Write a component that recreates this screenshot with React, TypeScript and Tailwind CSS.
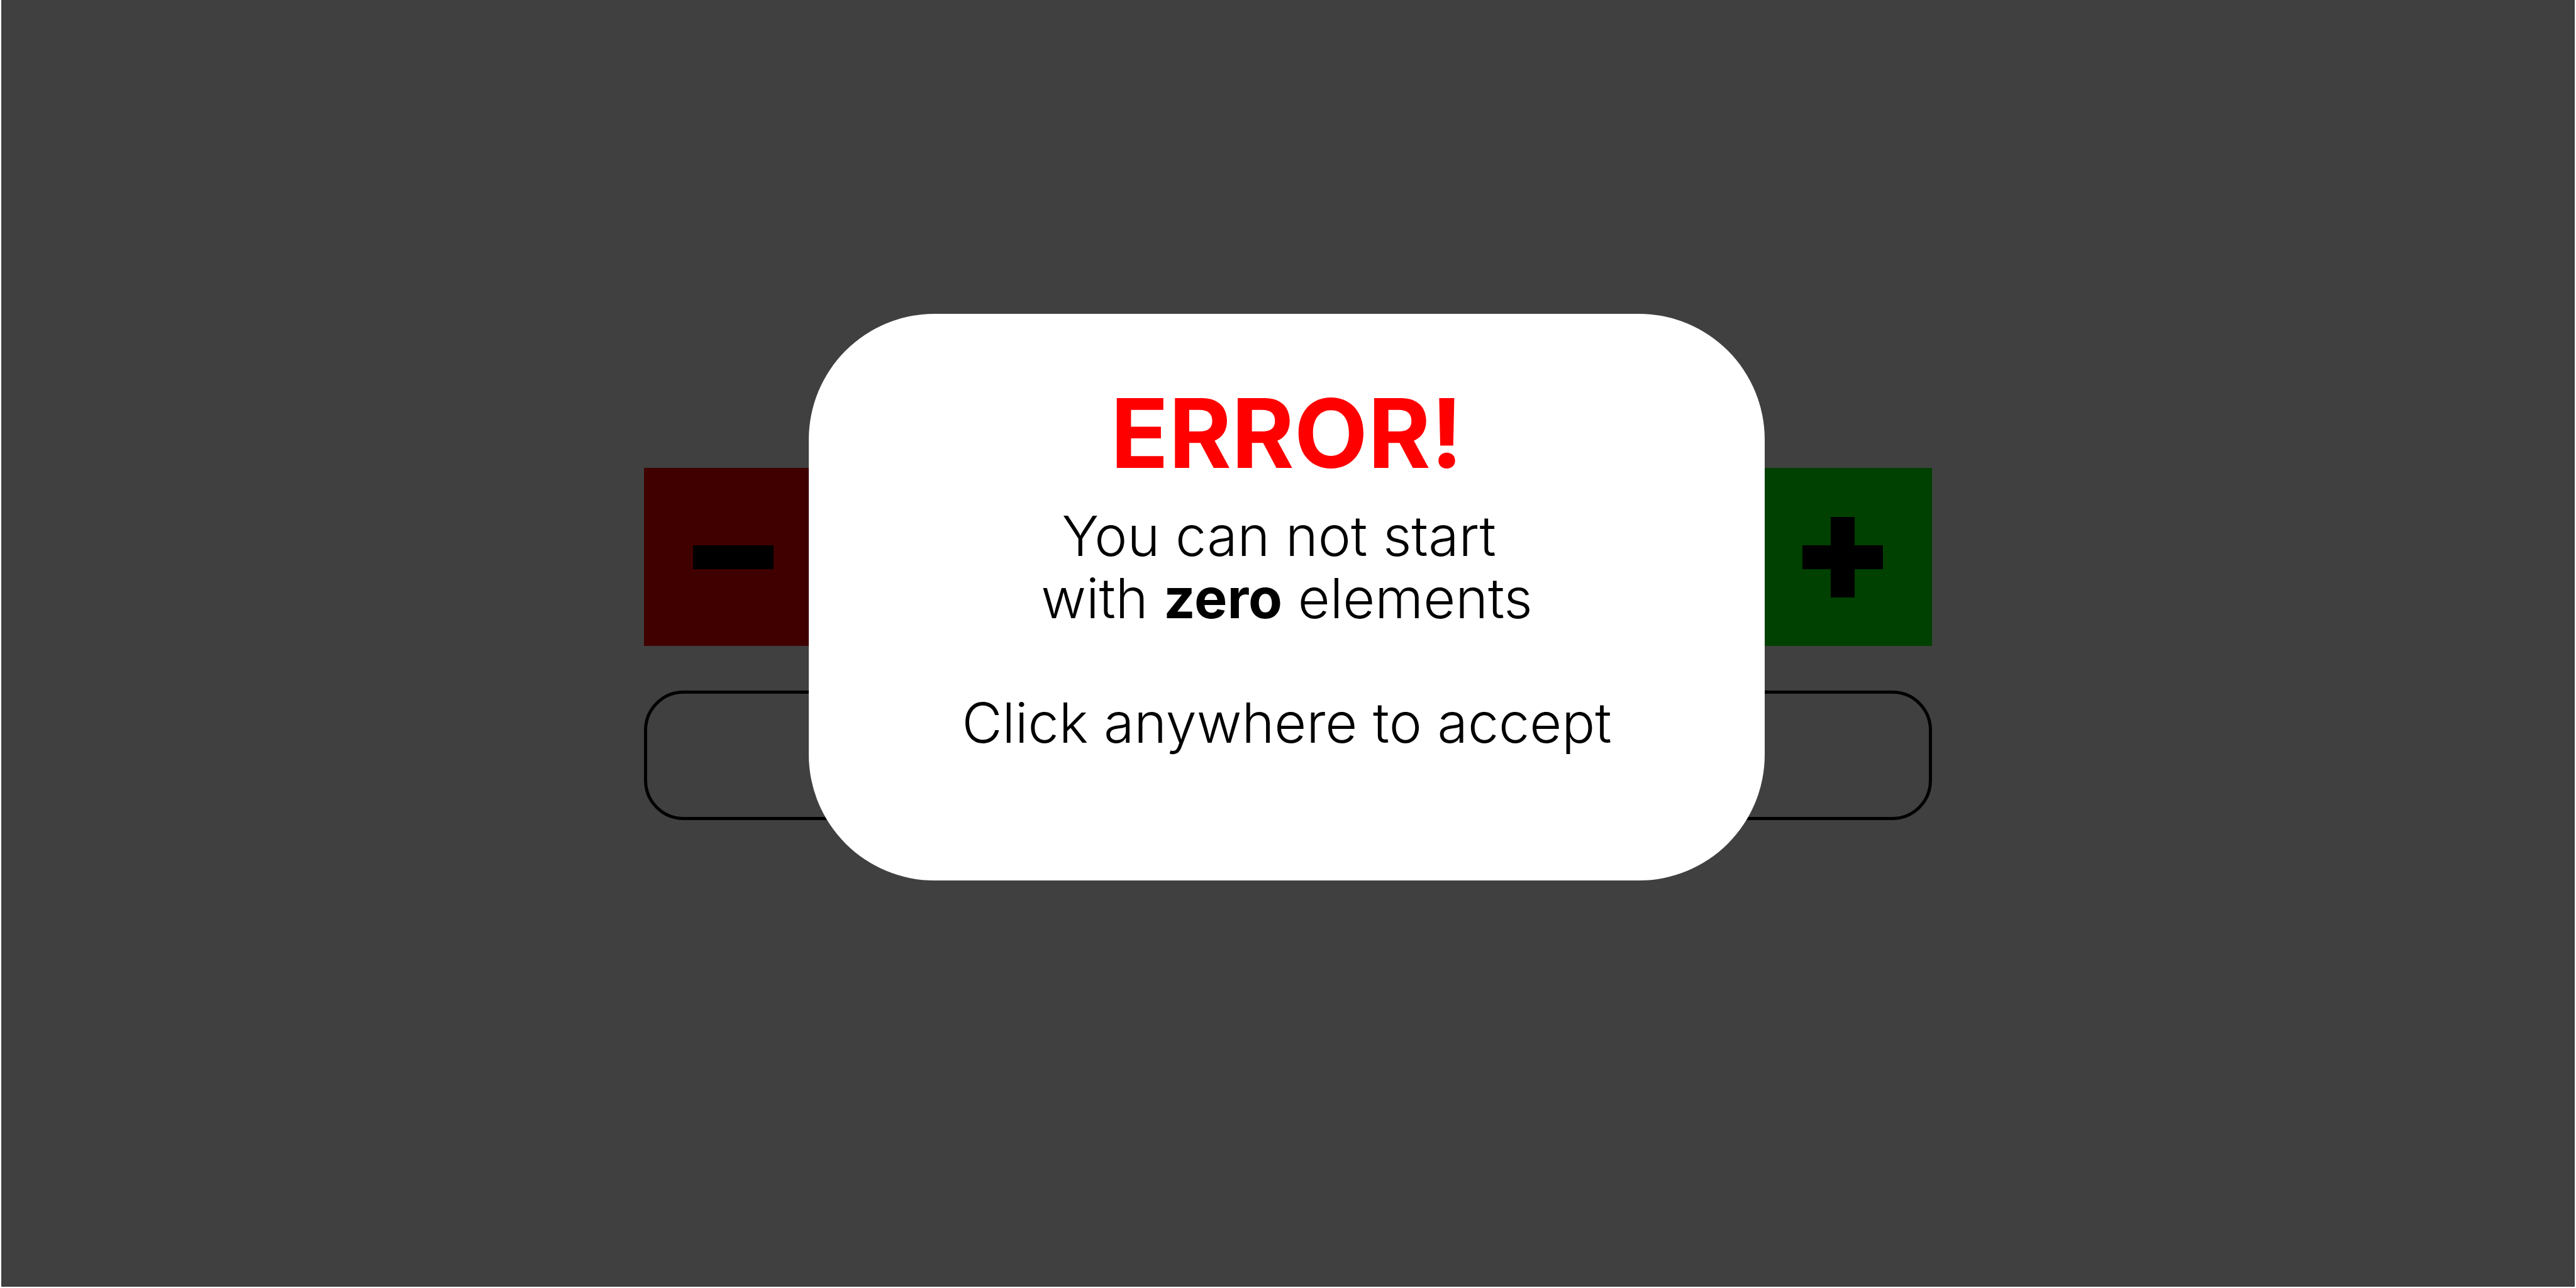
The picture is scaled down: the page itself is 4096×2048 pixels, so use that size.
import { useState } from "react";

function Setup() {
  return (
    <main className="mx-auto flex w-1/2 flex-col gap-[71px] pt-[744px]">
      <div className="flex justify-between">
        <button
          type="button"
          aria-label="Remove element"
          className="flex h-[283px] w-[284px] items-center justify-center bg-[#ff0000]"
        >
          <svg viewBox="0 0 128 128" className="size-32" aria-hidden="true">
            <rect x="0" y="45" width="128" height="38" />
          </svg>
        </button>
        <button
          type="button"
          aria-label="Add element"
          className="flex h-[283px] w-[284px] items-center justify-center bg-[#00ff00]"
        >
          <svg viewBox="0 0 128 128" className="size-32" aria-hidden="true">
            <path d="M45 0h38v45h45v38H83v45H45V83H0V45h45z" />
          </svg>
        </button>
      </div>
      <button
        type="button"
        aria-label="Start"
        className="h-[206px] w-full rounded-[63px] border-5 border-black"
      />
    </main>
  );
}

function ErrorDialog({ onAccept }: { onAccept: () => void }) {
  return (
    <div
      onClick={onAccept}
      className="fixed inset-0 mx-0.5 mb-0.5 flex items-start justify-center bg-black/75 pt-[499px] pr-1"
    >
      <section
        role="alertdialog"
        aria-labelledby="error-title"
        aria-describedby="error-text"
        className="flex w-[1520px] flex-col gap-6 rounded-[200px] bg-white pt-[100px] pb-[201px] text-center"
      >
        <h1 id="error-title" className="text-[152px] leading-[180px] font-bold text-[#ff0000]">
          ERROR!
        </h1>
        <div id="error-text" className="flex flex-col gap-[99px] text-[88px] leading-[99px] font-light text-black">
          <p>
            You can not start&nbsp;
            <br />
            with <b className="font-bold">zero</b> elements
          </p>
          <p>Click anywhere to accept</p>
        </div>
      </section>
    </div>
  );
}

export default function App() {
  const [open, setOpen] = useState(true);
  return (
    <div className="min-h-screen bg-white font-['Inter',sans-serif]">
      <Setup />
      {open && <ErrorDialog onAccept={() => setOpen(false)} />}
    </div>
  );
}
